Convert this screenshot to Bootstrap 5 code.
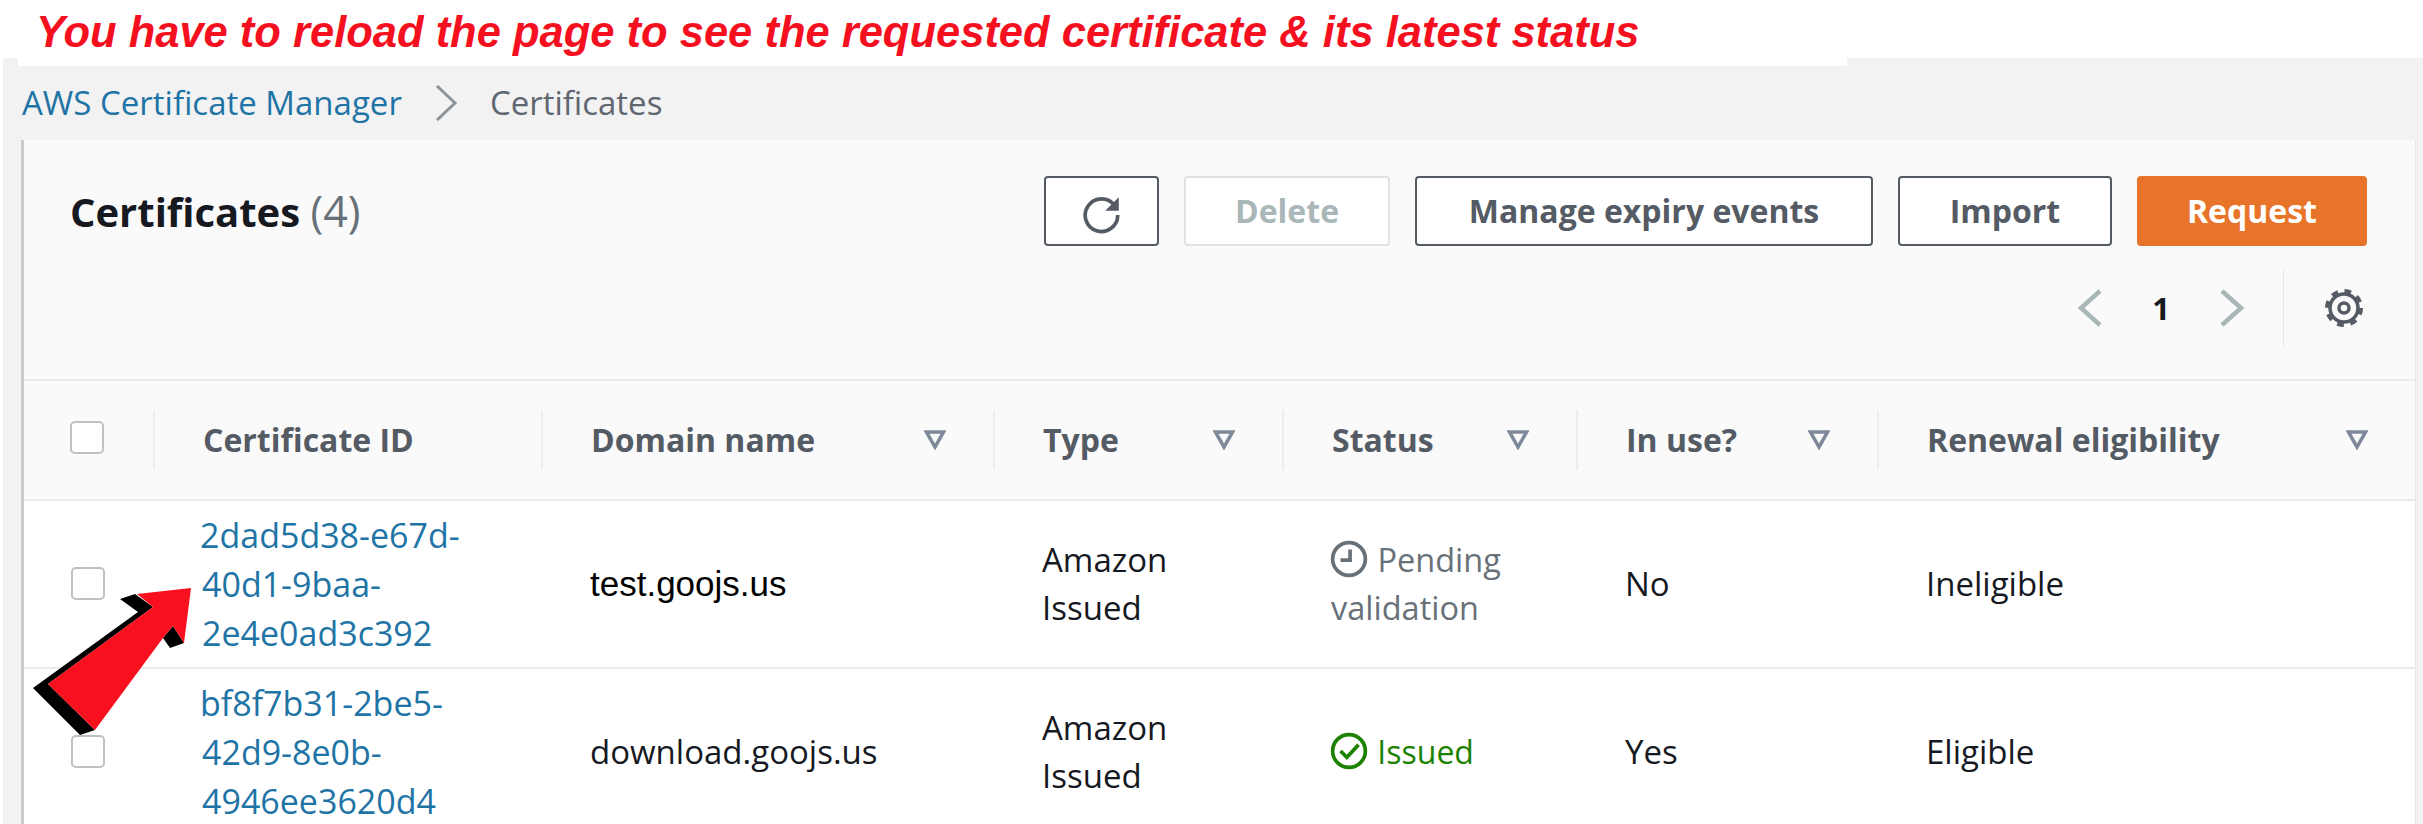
<!DOCTYPE html>
<html lang="en">
<head>
  <meta charset="UTF-8" />
  <title>Certificates</title>
  <link href="https://cdn.jsdelivr.net/npm/bootstrap@5.3.0/dist/css/bootstrap.min.css" rel="stylesheet">
  <style>
    html, body { height: 100%; overflow: hidden; }
    body { background: #fff; font-family: "Open Sans", sans-serif; font-size: 33px; color: #16191f; position: relative; }

    .note-bar { position: relative; z-index: 1; height: 66px; width: 1829px; margin-left: 18px; margin-bottom: -8px; padding-left: 18px; background: #fff;
      font-family: "Liberation Sans", sans-serif; font-weight: 700; font-style: italic; font-size: 43.5px; line-height: 64px; color: #f5101f; white-space: nowrap; }

    .console { margin-left: 3px; background: #f2f2f3; height: 766px; padding: 8px 7px 0 18px; }
    .crumbs { height: 74px; padding-left: 1px; gap: 32px; }
    .crumbs a { color: #1f74a6; text-decoration: none; }
    .crumbs span { color: #5f6670; }

    .panel { background: #fff; border-left: 3px solid #c9cccf; border-right: 1px solid #e4e6e8; height: 700px; }
    .panel-top { background: #fafafa; height: 241px; padding: 36px 48px 0 46px; border-bottom: 2px solid #e9ebed; }
    .panel-title { font-size: 40px; font-weight: 700; margin: 0; color: #16191f; }
    .panel-title span { font-weight: 400; color: #687078; font-size: 43px; }

    .act-btn { height: 70px; font-family: "Open Sans", sans-serif; font-size: 32px; font-weight: 700; color: #545b64; background: #fff; border: 2px solid #545b64; border-radius: 4px; padding: 0; }
    .act-btn:disabled { color: #aab7b8; border-color: #dfe3e5; background: #fff; opacity: 1; }
    .act-orange { background: #e8742a; border-color: #e8742a; color: #fff; }
    .w-refresh { width: 115px; }
    .w-delete { width: 206px; }
    .w-manage { width: 458px; }
    .w-import { width: 214px; }
    .w-request { width: 230px; }
    .actions { gap: 25px; }
    .pager { margin-top: 24px; height: 76px; padding-right: 3px; }
    .page-num { font-size: 31px; font-weight: 700; width: 116px; text-align: center; color: #16191f; }
    .pager-line { width: 1px; height: 76px; background: #e4e6e8; margin: 0 40px 0 38px; }

    .cert-table { table-layout: fixed; width: 100%; margin: 0; --bs-table-bg: transparent; color: #16191f; }
    .cert-table th { background: #fafafa; height: 119px; padding: 0; vertical-align: middle; border-bottom: 2px solid #e9ebed; font-weight: 700; color: #545b64; font-size: 32px; }
    .cert-table td { height: 168px; padding: 0 47px; vertical-align: middle; line-height: 48px; border-bottom: 2px solid #e9ebed; }
    .head-cell { height: 60px; padding: 0 47px 0 48px; border-right: 2px solid #eceef0; }
    .cert-table th:last-child .head-cell { border-right: 0; }
    .head-first { padding: 0 4px 6px 0; justify-content: center; }
    .cert-table td.td-check { padding: 0 4px 8px 0; text-align: center; }
    .tick-box { display: inline-block; width: 34px; height: 33px; border: 2px solid #bcc1c5; border-radius: 5px; background: #fff; vertical-align: middle; }
    .cert-table a { color: #1f74a6; text-decoration: none; font-size: 34px; margin-left: -2px; }
    .plain-font { font-family: "Liberation Sans", sans-serif; color: #000; font-size: 35px; }
    .st-pending { color: #687078; font-size: 32.5px; }
    .st-issued { color: #1d8102; font-size: 32px; }
    .st-icon { vertical-align: -6px; margin-right: 1px; margin-left: -1px; }
    .pointer-arrow { position: absolute; left: 0; top: 0; z-index: 2; }
  </style>
</head>
<body>

<div class="note-bar">You have to reload the page to see the requested certificate &amp; its latest status</div>

<div class="console">
  <!-- Breadcrumb -->
  <div class="crumbs d-flex align-items-center">
    <a href="#">AWS Certificate Manager</a>
    <svg width="24" height="36" viewBox="0 0 24 36"><path d="M3 1l18 17L3 35" fill="none" stroke="#8d9499" stroke-width="3"/></svg>
    <span>Certificates</span>
  </div>

  <div class="panel">
    <div class="panel-top">
      <div class="d-flex justify-content-between align-items-center">
        <h1 class="panel-title">Certificates <span>(4)</span></h1>
        <div class="actions d-flex">
          <button class="act-btn w-refresh" type="button">
            <svg width="42" height="42" viewBox="0 0 40 40"><path d="M32 12A15.5 15.5 0 1 0 35 21" fill="none" stroke="#545b64" stroke-width="3.5"/><path d="M36 4v13H23z" fill="#545b64"/></svg>
          </button>
          <button class="act-btn w-delete" type="button" disabled>Delete</button>
          <button class="act-btn w-manage" type="button">Manage expiry events</button>
          <button class="act-btn w-import" type="button">Import</button>
          <button class="act-btn act-orange w-request" type="button">Request</button>
        </div>
      </div>
      <div class="pager d-flex justify-content-end align-items-center">
        <svg width="26" height="38" viewBox="0 0 26 38"><path d="M23 2L4 19l19 17" fill="none" stroke="#aab7b8" stroke-width="4.5"/></svg>
        <span class="page-num">1</span>
        <svg width="26" height="38" viewBox="0 0 26 38"><path d="M3 2l19 17L3 36" fill="none" stroke="#aab7b8" stroke-width="4.5"/></svg>
        <div class="pager-line"></div>
        <svg width="40" height="40" viewBox="0 0 40 40">
          <circle cx="20" cy="20" r="14" fill="none" stroke="#545b64" stroke-width="3.5"/>
          <circle cx="20" cy="20" r="16.5" fill="none" stroke="#545b64" stroke-width="5" stroke-dasharray="6.5 6.46"/>
          <circle cx="20" cy="20" r="5" fill="none" stroke="#545b64" stroke-width="3.5"/>
        </svg>
      </div>
    </div>

    <table class="cert-table table">
      <thead>
        <tr>
          <th style="width:131px"><div class="head-cell head-first d-flex align-items-center"><span class="tick-box"></span></div></th>
          <th style="width:388px"><div class="head-cell d-flex align-items-center justify-content-between">Certificate ID</div></th>
          <th style="width:452px"><div class="head-cell d-flex align-items-center justify-content-between">Domain name <svg width="22" height="20" viewBox="0 0 22 20"><path d="M2.5 2h17L11 17z" fill="none" stroke="#7d8998" stroke-width="3.5"/></svg></div></th>
          <th style="width:289px"><div class="head-cell d-flex align-items-center justify-content-between">Type <svg width="22" height="20" viewBox="0 0 22 20"><path d="M2.5 2h17L11 17z" fill="none" stroke="#7d8998" stroke-width="3.5"/></svg></div></th>
          <th style="width:294px"><div class="head-cell d-flex align-items-center justify-content-between">Status <svg width="22" height="20" viewBox="0 0 22 20"><path d="M2.5 2h17L11 17z" fill="none" stroke="#7d8998" stroke-width="3.5"/></svg></div></th>
          <th style="width:301px"><div class="head-cell d-flex align-items-center justify-content-between">In use? <svg width="22" height="20" viewBox="0 0 22 20"><path d="M2.5 2h17L11 17z" fill="none" stroke="#7d8998" stroke-width="3.5"/></svg></div></th>
          <th><div class="head-cell d-flex align-items-center justify-content-between">Renewal eligibility <svg width="22" height="20" viewBox="0 0 22 20"><path d="M2.5 2h17L11 17z" fill="none" stroke="#7d8998" stroke-width="3.5"/></svg></div></th>
        </tr>
      </thead>
      <tbody>
        <tr>
          <td class="td-check"><span class="tick-box"></span></td>
          <td><a href="#">2dad5d38-e67d-40d1-9baa-2e4e0ad3c392</a></td>
          <td class="plain-font">test.goojs.us</td>
          <td>Amazon Issued</td>
          <td class="st-pending">
            <svg class="st-icon" width="38" height="38" viewBox="0 0 36 36"><circle cx="18" cy="18" r="15.5" fill="none" stroke="#687078" stroke-width="3.5"/><path d="M19 9v10h-9" fill="none" stroke="#687078" stroke-width="3.5"/></svg>
            Pending validation
          </td>
          <td>No</td>
          <td>Ineligible</td>
        </tr>
        <tr>
          <td class="td-check"><span class="tick-box"></span></td>
          <td><a href="#">bf8f7b31-2be5-42d9-8e0b-4946ee3620d4</a></td>
          <td>download.goojs.us</td>
          <td>Amazon Issued</td>
          <td class="st-issued">
            <svg class="st-icon" width="38" height="38" viewBox="0 0 36 36"><circle cx="18" cy="18" r="15.5" fill="none" stroke="#1d8102" stroke-width="3.5"/><path d="M10 18l6 6 11-12" fill="none" stroke="#1d8102" stroke-width="3.5"/></svg>
            Issued
          </td>
          <td>Yes</td>
          <td>Eligible</td>
        </tr>
      </tbody>
    </table>
  </div>
</div>

<!-- Callout arrow over the table -->
<svg class="pointer-arrow" width="220" height="760" viewBox="0 0 220 760">
  <polygon points="135,594 120,599 138,612 33,688 80,735 95,730 48,684 153,607" fill="#000"/>
  <polygon points="173,626 163,638 170,648 184,643" fill="#000"/>
  <polygon points="191,588 137,594 153,607 48,684 95,730 163,638 173,626 184,643" fill="#f9101f"/>
</svg>

</body>
</html>
